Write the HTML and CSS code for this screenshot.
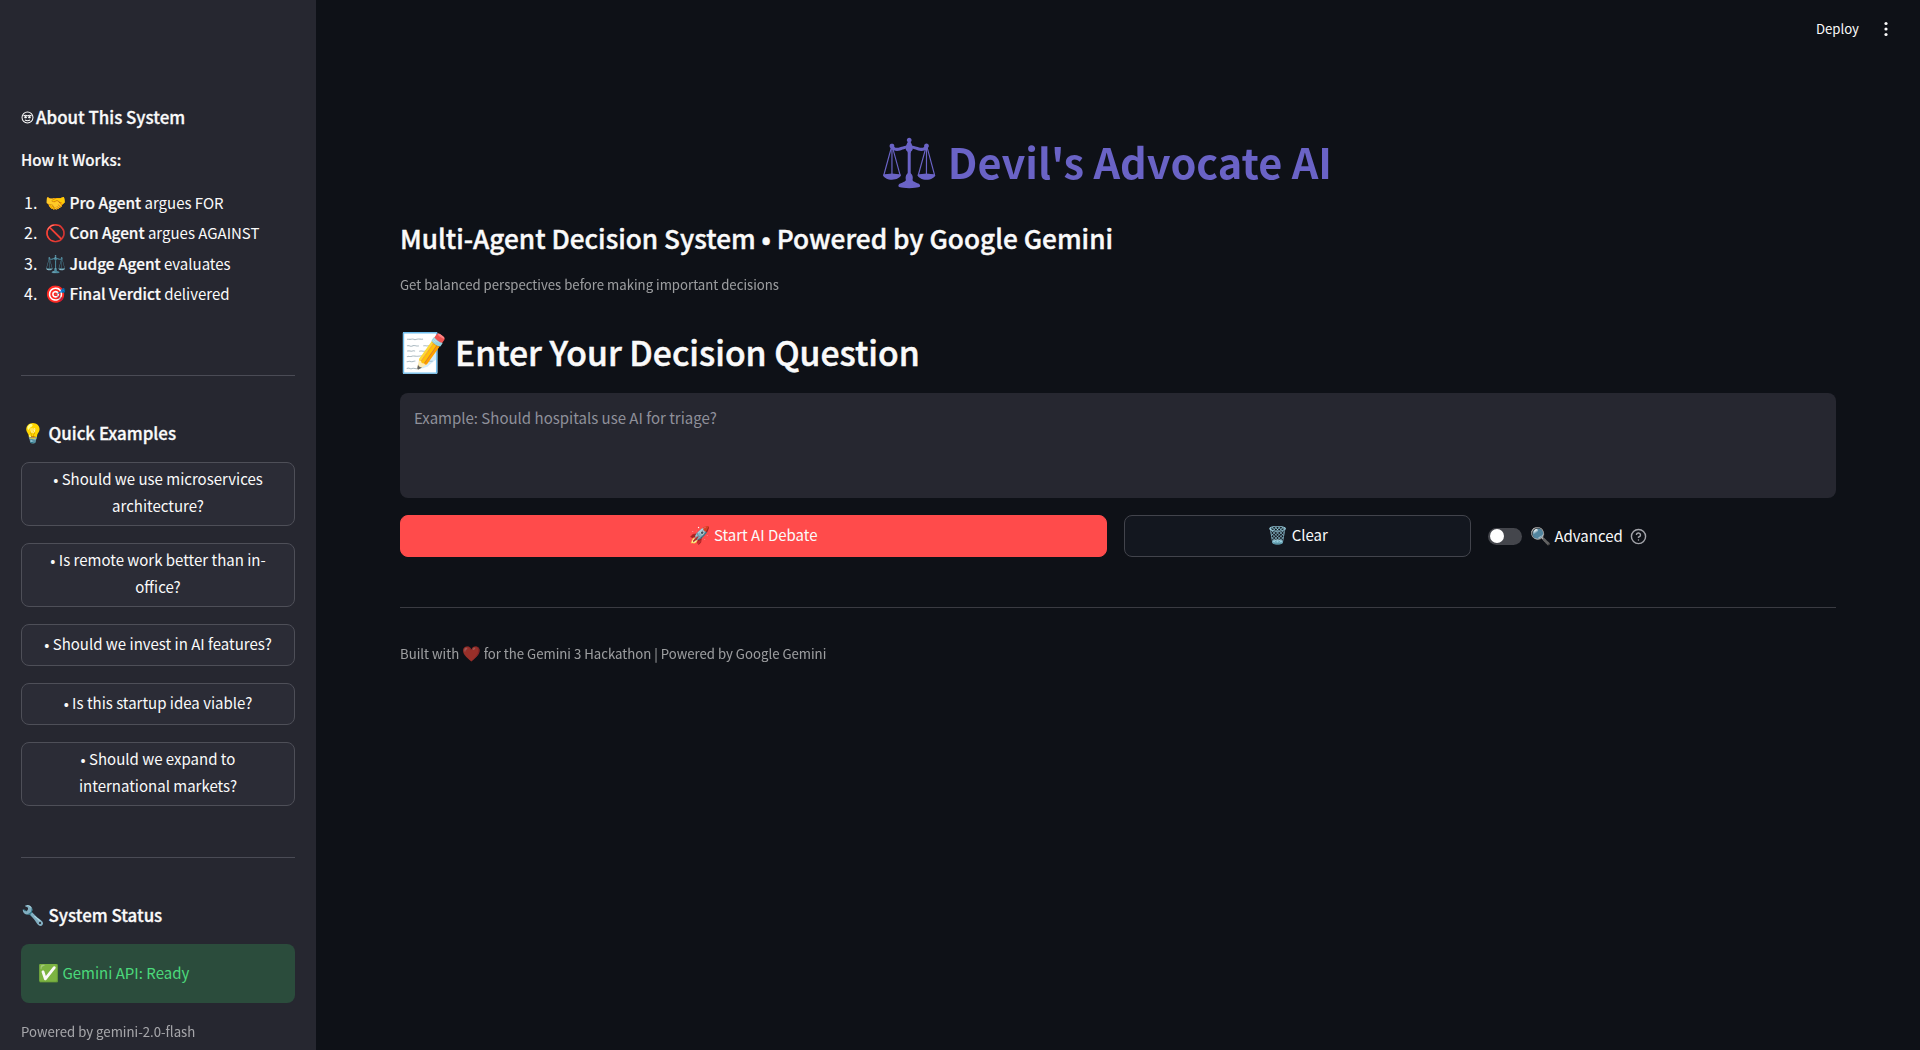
FILE: index.html
```html
<!DOCTYPE html>
<html lang="en">
<head>
<meta charset="utf-8">
<title>Devil's Advocate AI</title>
<link rel="stylesheet" href="styles.css">
</head>
<body>
<div class="app">
  <aside class="sidebar">
    <h3 class="about-head"><svg class="brain" viewBox="0 0 14 14" aria-hidden="true"><circle cx="7" cy="7" r="5.9"/><path d="M2.6 5.2c1.6-.7 3.2-.7 4.4 0 1.2-.7 2.8-.7 4.4 0"/><circle class="eye" cx="4.9" cy="6.6" r="1.3"/><circle class="eye" cx="9.1" cy="6.6" r="1.3"/><path d="M4.2 9.7c1.8 1 3.8 1 5.6 0"/></svg>About This System</h3>
    <p class="how">How It Works:</p>
    <ol class="steps">
      <li><span class="e">🤝</span> <strong>Pro Agent</strong> argues FOR</li>
      <li><span class="e">🚫</span> <strong>Con Agent</strong> argues AGAINST</li>
      <li><span class="e">⚖️</span> <strong>Judge Agent</strong> evaluates</li>
      <li><span class="e">🎯</span> <strong>Final Verdict</strong> delivered</li>
    </ol>
    <hr class="side-rule rule-one">
    <h3 class="side-head"><span class="e">💡</span> Quick Examples</h3>
    <div class="examples">
      <button class="example">• Should we use microservices architecture?</button>
      <button class="example">• Is remote work better than in-office?</button>
      <button class="example">• Should we invest in AI features?</button>
      <button class="example">• Is this startup idea viable?</button>
      <button class="example">• Should we expand to international markets?</button>
    </div>
    <hr class="side-rule rule-two">
    <h3 class="side-head"><span class="e">🔧</span> System Status</h3>
    <div class="status"><span class="e">✅</span> Gemini API: Ready</div>
    <p class="powered">Powered by gemini-2.0-flash</p>
  </aside>
  <main class="main">
    <header class="topbar">
      <span class="deploy">Deploy</span>
      <svg class="kebab" viewBox="0 0 4 16" aria-hidden="true"><circle cx="2" cy="2.5" r="1.6"/><circle cx="2" cy="8" r="1.6"/><circle cx="2" cy="13.5" r="1.6"/></svg>
    </header>
    <div class="content">
      <h1 class="title"><span class="e">⚖️</span> Devil's Advocate AI</h1>
      <h3 class="subtitle">Multi-Agent Decision System • Powered by Google Gemini</h3>
      <p class="tagline">Get balanced perspectives before making important decisions</p>
      <h2 class="question"><span class="e">📝</span> Enter Your Decision Question</h2>
      <div class="input" role="textbox">Example: Should hospitals use AI for triage?</div>
      <div class="actions">
        <button class="btn primary"><span class="e">🚀</span> Start AI Debate</button>
        <button class="btn secondary"><span class="e">🗑️</span> Clear</button>
        <div class="advanced">
          <span class="toggle"><span class="knob"></span></span>
          <span class="adv-label"><span class="e">🔍</span> Advanced</span>
          <svg class="help" viewBox="0 0 24 24" aria-hidden="true"><circle cx="12" cy="12" r="10"/><path d="M9.1 9a3 3 0 0 1 5.8 1c0 2-3 3-3 3"/><path d="M12 17h.01"/></svg>
        </div>
      </div>
      <hr class="main-rule">
      <p class="footer">Built with <span class="e">❤️</span> for the Gemini 3 Hackathon | Powered by Google Gemini</p>
    </div>
  </main>
</div>
</body>
</html>
```

FILE: styles.css
```css
* { box-sizing: border-box; }
html, body { margin: 0; height: 100%; overflow: hidden; }
body {
  font-family: "Noto Sans CJK JP", "Noto Sans CJK SC", "Noto Color Emoji", sans-serif;
  font-size: 15px;
  line-height: 1.6;
  color: #fafafa;
  background: #0e1117;
}
.e { font-size: 1.13em; line-height: 1; }
.app { display: flex; height: 1050px; }
.sidebar {
  width: 316px;
  flex: none;
  padding: 104px 21px 0;
  background: #262730;
  overflow: hidden;
}
h1, h2, h3, p, ol { margin: 0; }
.about-head {
  display: flex;
  align-items: center;
  gap: 2px;
  font-size: 16.9px;
  font-weight: 500;
  -webkit-text-stroke: 0.3px #fafafa;
  line-height: 26px;
}
.brain { width: 13px; height: 13px; fill: none; stroke: #fafafa; stroke-width: 1.1; }
.brain .eye { fill: #fafafa; stroke: none; }
.how { margin-top: 16px; font-size: 15.2px; font-weight: 500; -webkit-text-stroke: 0.2px #fafafa; line-height: 26px; }
.steps { margin-top: 15px; padding-left: 20px; }
.steps li { height: 30.3px; padding-left: 4px; line-height: 30.3px; }
.steps li::marker { font-size: 16px; }
.steps strong { font-size: 15.4px; font-weight: 500; -webkit-text-stroke: 0.2px #fafafa; }
.side-rule { margin: 0; border: 0; border-top: 1px solid #4a4b55; }
.rule-one { margin-top: 67px; }
.rule-two { margin-top: 51px; }
.side-head { margin-top: 44px; font-size: 16.9px; font-weight: 500; -webkit-text-stroke: 0.3px #fafafa; line-height: 26px; }
.side-head .e { -webkit-text-stroke: 0; }
.examples { display: flex; flex-direction: column; gap: 17px; margin-top: 16px; }
.example {
  width: 100%;
  min-height: 42px;
  padding: 2px 12px 6px;
  font: inherit;
  line-height: 27px;
  color: #fafafa;
  background: #2b2c36;
  border: 1px solid #4e4f58;
  border-radius: 8px;
}
.status {
  height: 59px;
  margin-top: 16px;
  padding: 0 17px;
  line-height: 57px;
  color: #4bd97b;
  background: #2b4c3c;
  border-radius: 8px;
}
.powered { margin-top: 18px; font-size: 13.2px; line-height: 22px; color: #fafafa; opacity: 0.6; }
.main { flex: 1; min-width: 0; }
.topbar {
  display: flex;
  justify-content: flex-end;
  align-items: center;
  gap: 25px;
  height: 58px;
  padding-right: 32px;
}
.deploy { font-size: 13.2px; }
.kebab { width: 4px; height: 16px; fill: #fafafa; }
.content { padding: 0 84px; }
.title {
  padding: 66px 24px 0 0;
  font-size: 41.5px;
  font-weight: 700;
  line-height: 75px;
  text-align: center;
  color: transparent;
  background: #6a63c6;
  background-clip: text;
  -webkit-background-clip: text;
}
.subtitle { margin-top: 17px; font-size: 26.2px; font-weight: 500; -webkit-text-stroke: 0.4px #fafafa; line-height: 44px; }
.tagline { margin-top: 14px; font-size: 13.2px; line-height: 22px; color: #fafafa; opacity: 0.6; }
.question { margin-top: 30px; font-size: 33.7px; font-weight: 500; -webkit-text-stroke: 0.5px #fafafa; line-height: 52px; }
.question .e { -webkit-text-stroke: 0; }
.input {
  height: 105px;
  margin-top: 15px;
  padding: 12px 14px;
  line-height: 26px;
  color: #8f909a;
  background: #262730;
  border-radius: 8px;
}
.actions {
  display: grid;
  grid-template-columns: 707px 347px 1fr;
  gap: 17px;
  align-items: center;
  margin-top: 17px;
}
.btn {
  height: 42px;
  padding: 0 6px 3px;
  font: inherit;
  line-height: 24px;
  color: #fafafa;
  border-radius: 8px;
}
.primary { background: #ff4b4b; border: 1px solid #ff4b4b; }
.secondary { background: #13171f; border: 1px solid #42444c; }
.advanced { display: flex; align-items: center; }
.toggle {
  display: block;
  width: 34px;
  height: 17px;
  padding: 1.5px 2px;
  background: #44464c;
  border-radius: 9px;
}
.knob { display: block; width: 14px; height: 14px; background: #fff; border-radius: 50%; }
.adv-label { margin-left: 8px; }
.help { width: 17px; height: 17px; margin-left: 7px; fill: none; stroke: #a3a4aa; stroke-width: 2; stroke-linecap: round; }
.main-rule { margin: 50px 0 0; border: 0; border-top: 1px solid #3a3b42; }
.footer { margin-top: 35px; font-size: 13.2px; line-height: 22px; color: #fafafa; opacity: 0.6; }
```
